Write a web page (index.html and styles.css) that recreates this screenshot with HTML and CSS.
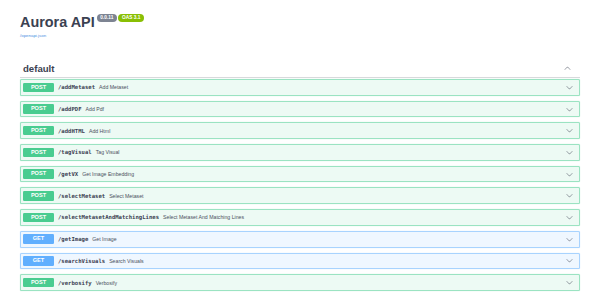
FILE: index.html
```html
<!DOCTYPE html>
<html lang="en">
<head>
    <meta charset="UTF-8">
    <meta name="viewport" content="width=device-width, initial-scale=1.0">
    <title>Aurora API</title>
    <link rel="stylesheet" href="styles.css">
</head>
<body>
    <div class="wrapper">
        <div class="info">
            <h1 class="title">Aurora API <span class="ver">0.0.11</span><span class="oas">OAS 3.1</span></h1>
            <a class="spec-link" href="#">/openapi.json</a>
        </div>

        <div class="tag-head">
            <span class="tag-name">default</span>
            <svg class="arrow" viewBox="0 0 20 20"><path d="M17.418 13.891c.272.268.709.268.979 0s.271-.701 0-.969l-7.908-7.83c-.27-.268-.707-.268-.979 0l-7.908 7.83c-.27.268-.27.701 0 .969.271.268.709.268.979 0L10 6.75l7.418 7.141z"/></svg>
        </div>

        <div class="ops">
            <div class="op post"><span class="method">POST</span><span class="path">/addMetaset</span><span class="desc">Add Metaset</span><svg class="arrow" viewBox="0 0 20 20"><path d="M17.418 6.109c.272-.268.709-.268.979 0s.271.701 0 .969l-7.908 7.83c-.27.268-.707.268-.979 0l-7.908-7.830c-.27-.268-.27-.701 0-.969.271-.268.709-.268.979 0L10 13.25l7.418-7.141z"/></svg></div>
            <div class="op post"><span class="method">POST</span><span class="path">/addPDF</span><span class="desc">Add Pdf</span><svg class="arrow" viewBox="0 0 20 20"><path d="M17.418 6.109c.272-.268.709-.268.979 0s.271.701 0 .969l-7.908 7.83c-.27.268-.707.268-.979 0l-7.908-7.830c-.27-.268-.27-.701 0-.969.271-.268.709-.268.979 0L10 13.25l7.418-7.141z"/></svg></div>
            <div class="op post"><span class="method">POST</span><span class="path">/addHTML</span><span class="desc">Add Html</span><svg class="arrow" viewBox="0 0 20 20"><path d="M17.418 6.109c.272-.268.709-.268.979 0s.271.701 0 .969l-7.908 7.83c-.27.268-.707.268-.979 0l-7.908-7.830c-.27-.268-.27-.701 0-.969.271-.268.709-.268.979 0L10 13.25l7.418-7.141z"/></svg></div>
            <div class="op post"><span class="method">POST</span><span class="path">/tagVisual</span><span class="desc">Tag Visual</span><svg class="arrow" viewBox="0 0 20 20"><path d="M17.418 6.109c.272-.268.709-.268.979 0s.271.701 0 .969l-7.908 7.83c-.27.268-.707.268-.979 0l-7.908-7.830c-.27-.268-.27-.701 0-.969.271-.268.709-.268.979 0L10 13.25l7.418-7.141z"/></svg></div>
            <div class="op post"><span class="method">POST</span><span class="path">/getVX</span><span class="desc">Get Image Embedding</span><svg class="arrow" viewBox="0 0 20 20"><path d="M17.418 6.109c.272-.268.709-.268.979 0s.271.701 0 .969l-7.908 7.83c-.27.268-.707.268-.979 0l-7.908-7.830c-.27-.268-.27-.701 0-.969.271-.268.709-.268.979 0L10 13.25l7.418-7.141z"/></svg></div>
            <div class="op post"><span class="method">POST</span><span class="path">/selectMetaset</span><span class="desc">Select Metaset</span><svg class="arrow" viewBox="0 0 20 20"><path d="M17.418 6.109c.272-.268.709-.268.979 0s.271.701 0 .969l-7.908 7.83c-.27.268-.707.268-.979 0l-7.908-7.830c-.27-.268-.27-.701 0-.969.271-.268.709-.268.979 0L10 13.25l7.418-7.141z"/></svg></div>
            <div class="op post"><span class="method">POST</span><span class="path">/selectMetasetAndMatchingLines</span><span class="desc">Select Metaset And Matching Lines</span><svg class="arrow" viewBox="0 0 20 20"><path d="M17.418 6.109c.272-.268.709-.268.979 0s.271.701 0 .969l-7.908 7.83c-.27.268-.707.268-.979 0l-7.908-7.830c-.27-.268-.27-.701 0-.969.271-.268.709-.268.979 0L10 13.25l7.418-7.141z"/></svg></div>
            <div class="op get"><span class="method">GET</span><span class="path">/getImage</span><span class="desc">Get Image</span><svg class="arrow" viewBox="0 0 20 20"><path d="M17.418 6.109c.272-.268.709-.268.979 0s.271.701 0 .969l-7.908 7.83c-.27.268-.707.268-.979 0l-7.908-7.830c-.27-.268-.27-.701 0-.969.271-.268.709-.268.979 0L10 13.25l7.418-7.141z"/></svg></div>
            <div class="op get"><span class="method">GET</span><span class="path">/searchVisuals</span><span class="desc">Search Visuals</span><svg class="arrow" viewBox="0 0 20 20"><path d="M17.418 6.109c.272-.268.709-.268.979 0s.271.701 0 .969l-7.908 7.83c-.27.268-.707.268-.979 0l-7.908-7.830c-.27-.268-.27-.701 0-.969.271-.268.709-.268.979 0L10 13.25l7.418-7.141z"/></svg></div>
            <div class="op post"><span class="method">POST</span><span class="path">/verbosify</span><span class="desc">Verbosify</span><svg class="arrow" viewBox="0 0 20 20"><path d="M17.418 6.109c.272-.268.709-.268.979 0s.271.701 0 .969l-7.908 7.83c-.27.268-.707.268-.979 0l-7.908-7.830c-.27-.268-.27-.701 0-.969.271-.268.709-.268.979 0L10 13.25l7.418-7.141z"/></svg></div>
        </div>
    </div>
</body>
</html>
```

FILE: styles.css
```css
body{
    margin: 0;
    background: #fff;
    font-family: "Liberation Sans", Arial, sans-serif;
    color: #3b4151;
}
.wrapper{
    padding: 0 21px 0 20px;
}
.info{
    padding-top: 14px;
}
.title{
    margin: 0;
    font-size: 14.4px;
    line-height: 17px;
    font-weight: bold;
    display: flex;
    align-items: flex-start;
}
.ver, .oas{
    font-size: 4.8px;
    line-height: 8px;
    height: 8px;
    padding: 0 3.6px;
    border-radius: 23px;
    color: #fff;
    font-weight: bold;
}
.ver{
    background: #7d8492;
    margin-left: 2px;
}
.oas{
    background: #89bf04;
    margin-left: 1.5px;
}
.spec-link{
    display: block;
    margin-top: 2px;
    font-size: 4.4px;
    line-height: 6px;
    color: #4990e2;
    text-decoration: none;
}
.tag-head{
    margin-top: 24px;
    display: flex;
    align-items: center;
    justify-content: space-between;
    padding: 0 9px 3px 3px;
    border-bottom: 1px solid rgba(59, 65, 81, 0.2);
}
.tag-name{
    font-size: 9.6px;
    line-height: 11px;
    font-weight: bold;
}
.tag-head .arrow{
    width: 7px;
    height: 7px;
    fill: #5a606e;
}
.ops{
    margin-top: 1px;
}
.op{
    box-sizing: border-box;
    height: 16.7px;
    margin-bottom: 5px;
    display: flex;
    align-items: center;
    padding: 0 6px 0 2px;
    border: 1px solid;
    border-radius: 1.6px;
}
.post{
    background: #edfaf4;
    border-color: rgba(73, 204, 144, 0.5);
    box-shadow: 0 0 1px rgba(73, 204, 144, 0.45);
}
.get{
    background: #eff7ff;
    border-color: rgba(97, 175, 254, 0.5);
    box-shadow: 0 0 1px rgba(97, 175, 254, 0.45);
}
.method{
    width: 31px;
    height: 9.5px;
    line-height: 9.5px;
    border-radius: 1.2px;
    color: #fff;
    font-size: 5.6px;
    font-weight: bold;
    text-align: center;
}
.post .method{
    background: #49cc90;
}
.get .method{
    background: #61affe;
}
.path{
    margin-left: 4px;
    font-family: "DejaVu Sans Mono", "Liberation Mono", monospace;
    font-size: 5.6px;
    font-weight: bold;
    color: #3b4151;
}
.desc{
    margin-left: 4px;
    font-size: 5.2px;
    color: #4b5161;
    flex: 1;
}
.op .arrow{
    width: 7px;
    height: 7px;
    fill: #5a606e;
}
```
